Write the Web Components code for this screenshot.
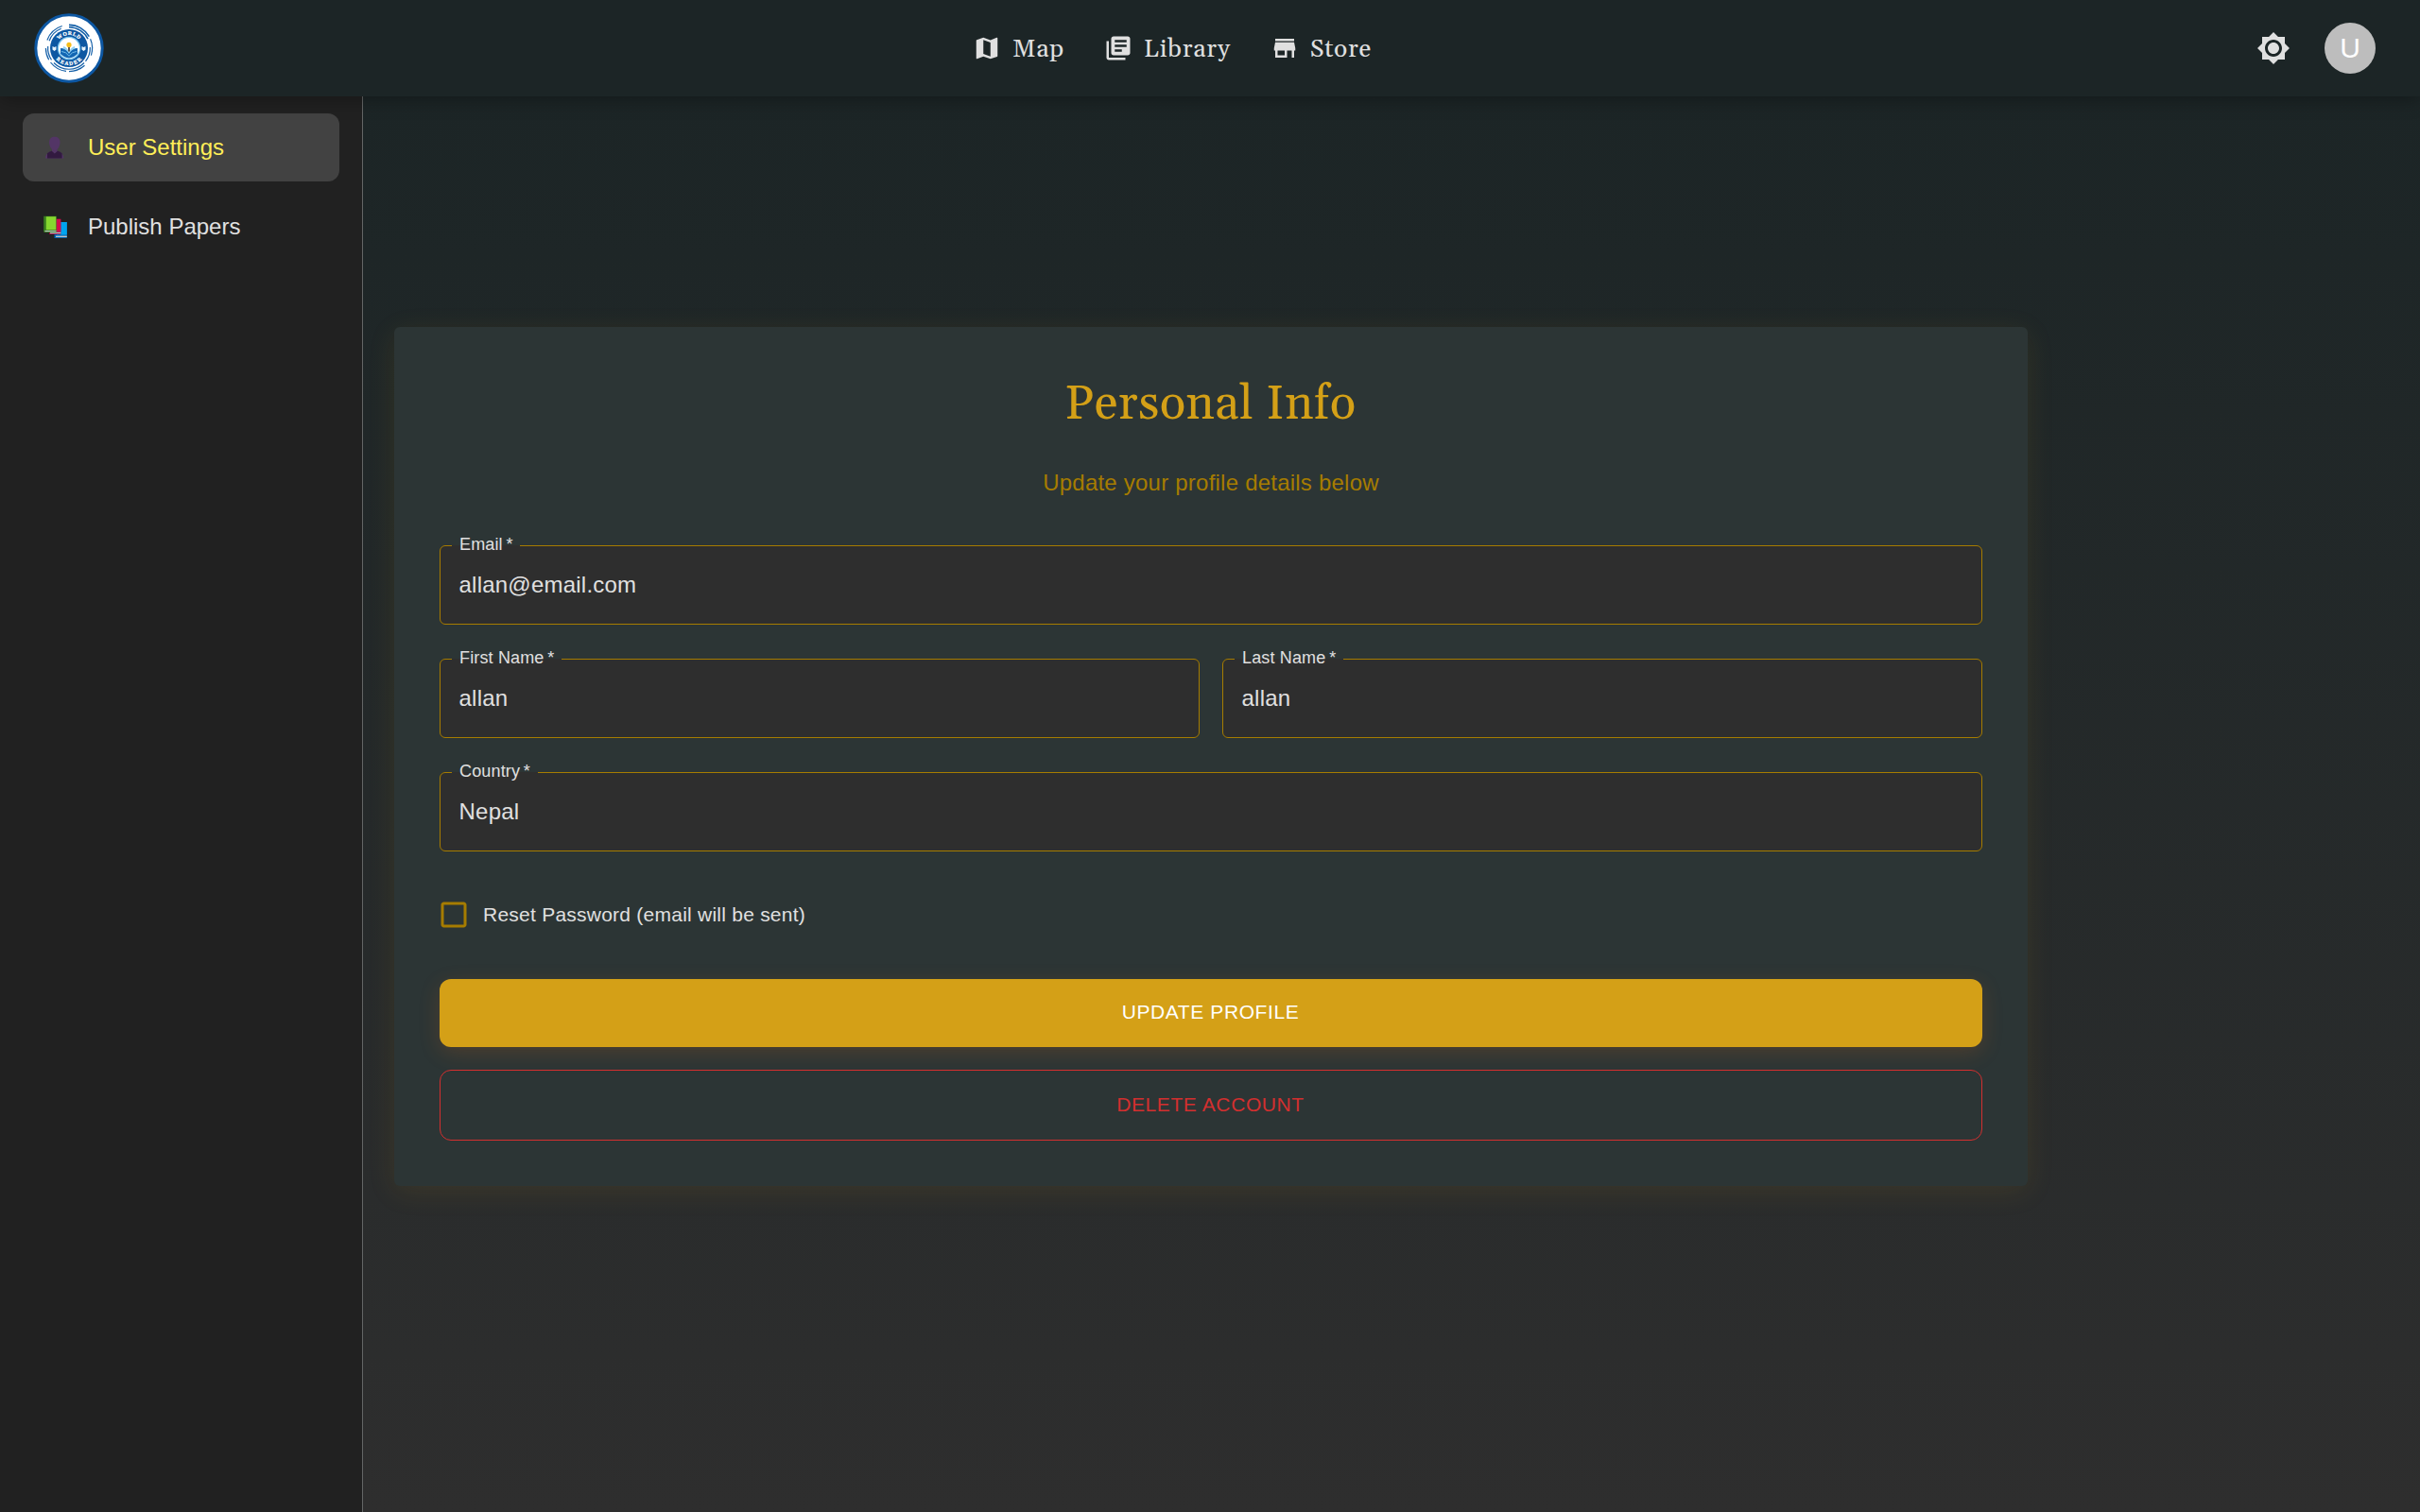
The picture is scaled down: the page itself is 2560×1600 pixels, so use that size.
<!DOCTYPE html>
<html lang="en">
<head>
<meta charset="utf-8">
<title>World Reader</title>
<style>
html,body{margin:0;height:100%}
body{font-family:"Liberation Sans",Arial,sans-serif;color:#e0e0e0;background:#212121;overflow:hidden}
</style>
</head>
<body>
<wr-app></wr-app>
<script>
const define=(name,html,setup)=>{
  const t=document.createElement('template');
  t.innerHTML=html;
  customElements.define(name,class extends HTMLElement{
    constructor(){
      super();
      this.attachShadow({mode:'open'}).append(t.content.cloneNode(true));
    }
    connectedCallback(){ if(setup) setup(this,this.shadowRoot); }
  });
};
const ICONS={
  map:'M20.5 3l-.16.03L15 5.1 9 3 3.36 4.9c-.21.07-.36.25-.36.48V20.5c0 .28.22.5.5.5l.16-.03L9 18.9l6 2.1 5.64-1.9c.21-.07.36-.25.36-.48V3.5c0-.28-.22-.5-.5-.5zM15 19l-6-2.11V5l6 2.11V19z',
  library:'M4 6H2v14c0 1.1.9 2 2 2h14v-2H4V6zm16-4H8c-1.1 0-2 .9-2 2v12c0 1.1.9 2 2 2h12c1.1 0 2-.9 2-2V4c0-1.1-.9-2-2-2zm-1 9H9V9h10v2zm-4 4H9v-2h6v2zm4-8H9V5h10v2z',
  store:'M20 4H4v2h16V4zm1 10v-2l-1-5H4l-1 5v2h1v6h10v-6h4v6h2v-6h1zm-9 4H6v-4h6v4z',
  sun:'M20 8.69V4h-4.69L12 .69 8.69 4H4v4.69L.69 12 4 15.31V20h4.69L12 23.31 15.31 20H20v-4.69L23.31 12 20 8.69zM12 18c-3.31 0-6-2.69-6-6s2.69-6 6-6 6 2.69 6 6-2.69 6-6 6zm0-10c-2.21 0-4 1.79-4 4s1.79 4 4 4 4-1.79 4-4-1.79-4-4-4z',
  box:'M19 5v14H5V5h14m0-2H5c-1.1 0-2 .9-2 2v14c0 1.1.9 2 2 2h14c1.1 0 2-.9 2-2V5c0-1.1-.9-2-2-2z'
};
define('wr-icon',`<style>:host{display:block;flex:none;width:30px;height:30px}svg{display:block;width:100%;height:100%;fill:currentColor}</style><svg viewBox="0 0 24 24"><path/></svg>`,
  (el,r)=>r.querySelector('path').setAttribute('d',ICONS[el.getAttribute('name')]));

define('wr-logo',`<style>:host{display:block;width:74px;height:74px}svg{display:block}</style>
<svg width="74" height="74" viewBox="-37 -37 74 74">
  <defs><path id="up" d="M-14 0A14 14 0 0 1 14 0"/><path id="dn" d="M-18 0A18 18 0 0 0 18 0"/></defs>
  <circle r="35.2" fill="#fff" stroke="#0d57a2" stroke-width="3"/>
  <g fill="none" stroke="#1560a8" stroke-width="1.2">
    <path d="M0-24.600A24.600 24.600 0 0 1 21.300-12.300M0-22.300A22.300 22.300 0 0 1 20-9.800" stroke-width="1.6"/>
    <path d="M22.600-9.700A24.600 24.600 0 0 1 23.400 7.600M22.300-1A22.300 22.300 0 0 1 17.500 13.800"/>
    <path d="M16.500 18.300A24.600 24.600 0 0 1 0 24.600M16 15.500A22.300 22.300 0 0 1-16 15.500M-3 24.400A24.600 24.600 0 0 1-19.500 15"/>
    <path d="M-21.300 12.300A24.600 24.600 0 0 1-24.600 0M-18.500 12.400A22.300 22.300 0 0 1-22.300-2"/>
    <path d="M-23.100-8.500A24.600 24.600 0 0 1-7.300-23.500M-20.900-7.800A22.300 22.300 0 0 1-8.300-20.700"/>
  </g>
  <circle r="20" fill="#0d57a2"/>
  <circle r="11.600" fill="#fff" stroke="#79c4ee" stroke-width="1.400"/>
  <g fill="#fff" font-family="Liberation Serif,serif" font-weight="700" font-size="5.6" stroke="#fff" stroke-width=".25" text-anchor="middle">
    <text letter-spacing=".6"><textPath href="#up" startOffset="50%">WORLD</textPath></text>
    <text letter-spacing="1.4"><textPath href="#dn" startOffset="51%">READER</textPath></text>
  </g>
  <path d="M-17.500-2l2 1 2-1v3.600l-2 1.500-2-1.500zM13.500-2l2 1 2-1v3.600l-2 1.500-2-1.500z" fill="#e4f2fb"/>
  <path d="M-9 0Q-3 0 0 5 3 0 9 0V6Q5 10.200 0 10.400-5 10.200-9 6Z" fill="#1266b3"/>
  <path d="M-6-2Q-2-1 0 4 2-1 6-2V1Q3 1 0 6-3 1-6 1Z" fill="#8fd0f3"/>
  <path d="M-8 3.500Q-3 3.500 0 8.300 3 3.500 8 3.500" fill="none" stroke="#7cc4ee" stroke-width=".9"/>
  <path d="M0 3.500V-1" stroke="#333" stroke-width="1.600"/>
  <circle cy="-3.600" r="2.600" fill="#f6bd1b"/>
</svg>`);

define('wr-nav-link',`<style>
:host{display:flex;align-items:center;gap:12px;font:26.4px/40px Gelasio,Georgia,"Liberation Serif",serif;letter-spacing:.75px;white-space:nowrap}
span{padding-top:3px}
</style><wr-icon></wr-icon><span><slot></slot></span>`,
  (el,r)=>{const i=r.querySelector('wr-icon');i.setAttribute('name',el.getAttribute('icon'));i.connectedCallback();});

define('wr-header',`<style>
:host{display:flex;align-items:center;justify-content:space-between;height:102px;flex:none;box-sizing:border-box;padding:0 47px 0 36px;background:#1c2526;box-shadow:0 4px 18px rgba(0,0,0,.3);z-index:2;position:relative}
.side{flex:1 1 0;display:flex;align-items:center}
.right{justify-content:flex-end;gap:36px}
nav{display:flex;gap:42px;margin-right:69px}
.right wr-icon{width:36px;height:36px}
.avatar{width:54px;height:54px;border-radius:50%;background:#bdbdbd;color:#fff;font-size:30px;line-height:54px;text-align:center}
</style>
<div class="side"><wr-logo></wr-logo></div>
<nav><wr-nav-link icon="map">Map</wr-nav-link><wr-nav-link icon="library">Library</wr-nav-link><wr-nav-link icon="store">Store</wr-nav-link></nav>
<div class="side right"><wr-icon name="sun"></wr-icon><div class="avatar">U</div></div>`);

define('wr-side-item',`<style>
:host{display:flex;align-items:center;box-sizing:border-box;height:72px;padding:0 21px;gap:21px;border-radius:12px;font-size:24px;line-height:36px}
:host([selected]){background:#424242;color:#ffee58}
.i{display:block;width:27px;height:27px}
</style><span class="i"><slot name="icon"></slot></span><span><slot></slot></span>`);

define('wr-sidebar',`<style>
:host{display:flex;flex-direction:column;gap:12px;flex:none;width:384px;box-sizing:border-box;padding:18px 24px;background:#212121;border-right:1px solid #646666}
svg{display:block}
</style>
<wr-side-item selected>
  <svg slot="icon" width="27" height="27" viewBox="0 0 27 27">
    <path d="M3 24.500c.2-4 2.500-6.500 7-7.500h5.500c4.500 1 6.500 3.500 6.800 7.500z" fill="#533566"/>
    <path d="M5 24.500v-5.200q2-2 4.600-2.600h6.500q2.700.6 4.500 2.600v5.200z" fill="#321a40"/>
    <path d="M10 13.500h5.600v3.500l-2.800 2.500-2.800-2.500z" fill="#533566"/>
    <path d="M7 7.500c0-4 2.500-5.800 5.800-5.800s5.700 1.800 5.700 5.800-2.500 8.800-5.700 8.800S7 11.500 7 7.500z" fill="#533566"/>
  </svg>User Settings</wr-side-item>
<wr-side-item>
  <svg slot="icon" width="27" height="27" viewBox="0 0 27 27">
    <path d="M12.500 8h13.300v17H12.500z" fill="#0063b1"/><path d="M15 8h10.800v13.500H15z" fill="#00a4ef"/><path d="M14 22.600h11.800v1.400H14z" fill="#bcc5ca"/>
    <path d="M7 4.800h12.300v16.200H7z" fill="#98083c"/><path d="M10 4.800h9.300V18H10z" fill="#d10d4d"/><path d="M8 18.800h11.300v1.300H8z" fill="#bcc5ca"/>
    <path d="M1.200 1.800h13.500v17.200H2.600q-1.400 0-1.400-1.500z" fill="#397d20"/><path d="M3.800 2.200h10.400v14H3.800z" fill="#86d72f"/><path d="M2.500 17h12v1.100h-12z" fill="#bcc5ca"/>
  </svg>Publish Papers</wr-side-item>`);

define('wr-field',`<style>
:host{display:block;flex:1 1 0;min-width:0}
fieldset{box-sizing:border-box;margin:-10px 0 0;height:94px;padding:0 12px;border:1px solid #a67c00;border-radius:6px;background:#2e2e2e;min-width:0}
legend{padding:0 7.500px 2px 8px;font-size:18px;line-height:18px;letter-spacing:.15px;height:18px;white-space:pre}
.v{padding:14px 7.500px 0;font-size:24px;line-height:36px;letter-spacing:.225px}
</style><fieldset><legend></legend><div class="v"><slot></slot></div></fieldset>`,
  (el,r)=>r.querySelector('legend').textContent=el.getAttribute('label')+'\u2009*');

define('wr-button',`<style>
:host{display:flex;align-items:center;justify-content:center;box-sizing:border-box;height:72px;padding:0 1px 2px 0;border-radius:12px;font-size:21px;line-height:36px;letter-spacing:.6px;background:#d4a017;color:#fff;box-shadow:0 6px 22px rgba(212,100,23,.2)}
:host([danger]){height:75px;background:none;color:#d32f2f;border:1px solid #d32f2f;box-shadow:none}
</style><slot></slot>`);

define('wr-checkbox',`<style>
:host{display:flex;align-items:center;gap:13px;font-size:21px;line-height:36px;letter-spacing:.24px}
wr-icon{width:36px;height:36px;margin-left:-3px;color:#a67c00}
</style><wr-icon name="box"></wr-icon><span><slot></slot></span>`);

define('wr-profile-card',`<style>
:host{display:flex;flex-direction:column;box-sizing:border-box;width:1728px;height:909px;padding:48px;background:#2c3535;border-radius:6px;box-shadow:0 6px 30px rgba(212,160,23,.1)}
h1{margin:3px 1px 0 0;font:400 51px/63px Gelasio,Georgia,"Liberation Serif",serif;letter-spacing:.42px;color:#d4a017;text-align:center}
p{margin:33px 0 48px;font-size:24px;line-height:36px;letter-spacing:.225px;color:#a67c00;text-align:center}
.form{display:flex;flex-direction:column;gap:36px}
.row{display:flex;gap:24px}
wr-checkbox{margin:49px 0 50px}
.actions{display:flex;flex-direction:column;gap:24px}
</style>
<h1>Personal Info</h1>
<p>Update your profile details below</p>
<div class="form">
  <wr-field label="Email">allan@email.com</wr-field>
  <div class="row"><wr-field label="First Name">allan</wr-field><wr-field label="Last Name">allan</wr-field></div>
  <wr-field label="Country">Nepal</wr-field>
</div>
<wr-checkbox>Reset Password (email will be sent)</wr-checkbox>
<div class="actions"><wr-button>UPDATE PROFILE</wr-button><wr-button danger>DELETE ACCOUNT</wr-button></div>`);

define('wr-app',`<style>
:host{display:flex;flex-direction:column;height:100vh}
.body{display:flex;flex:1;min-height:0}
main{flex:1;box-sizing:border-box;padding:244px 0 0 33px;background:linear-gradient(180deg,#1c2526,#2e2e2e)}
</style>
<wr-header></wr-header>
<div class="body"><wr-sidebar></wr-sidebar><main><wr-profile-card></wr-profile-card></main></div>`);
</script>
</body>
</html>
